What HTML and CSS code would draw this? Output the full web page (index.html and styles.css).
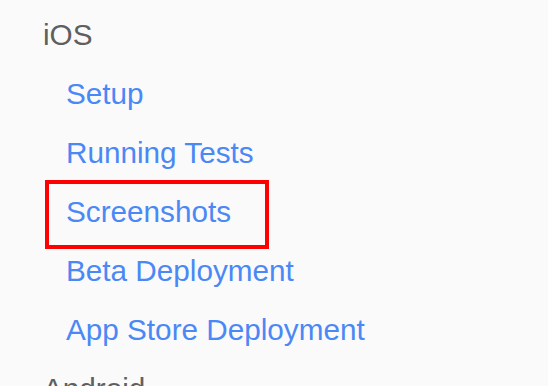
FILE: index.html
```html
<!DOCTYPE html>
<html>
<head>
    <meta charset="UTF-8">
    <title>Docs - Sidebar</title>
    <link rel="stylesheet" href="styles.css">
</head>
<body>
    <nav class="sidebar">
        <div class="section">
            <div class="section-title">iOS</div>
            <ul class="section-links">
                <li><a href="#">Setup</a></li>
                <li><a href="#">Running Tests</a></li>
                <li class="marked"><a href="#">Screenshots</a><span class="mark-box"></span></li>
                <li><a href="#">Beta Deployment</a></li>
                <li><a href="#">App Store Deployment</a></li>
            </ul>
        </div>
        <div class="section">
            <div class="section-title">Android</div>
        </div>
    </nav>
</body>
</html>
```

FILE: styles.css
```css
body {
    margin: 0;
    padding: 5px 0 0 0;
    font-family: "Liberation Sans", Arial, sans-serif;
    background: #fafafa;
    overflow: hidden;
}

.sidebar {
    font-size: 29.7px;
    line-height: 59px;
}

.section-title {
    padding-left: 43px;
    color: #5f5f5f;
}

.section-links {
    list-style: none;
    margin: 0;
    padding: 0 0 0 66px;
}

.section-links a {
    color: #4a88f5;
    text-decoration: none;
}

.marked {
    position: relative;
}

.mark-box {
    position: absolute;
    top: -2px;
    left: -21px;
    width: 216px;
    height: 61px;
    border: 4px solid #ff0000;
}
```
